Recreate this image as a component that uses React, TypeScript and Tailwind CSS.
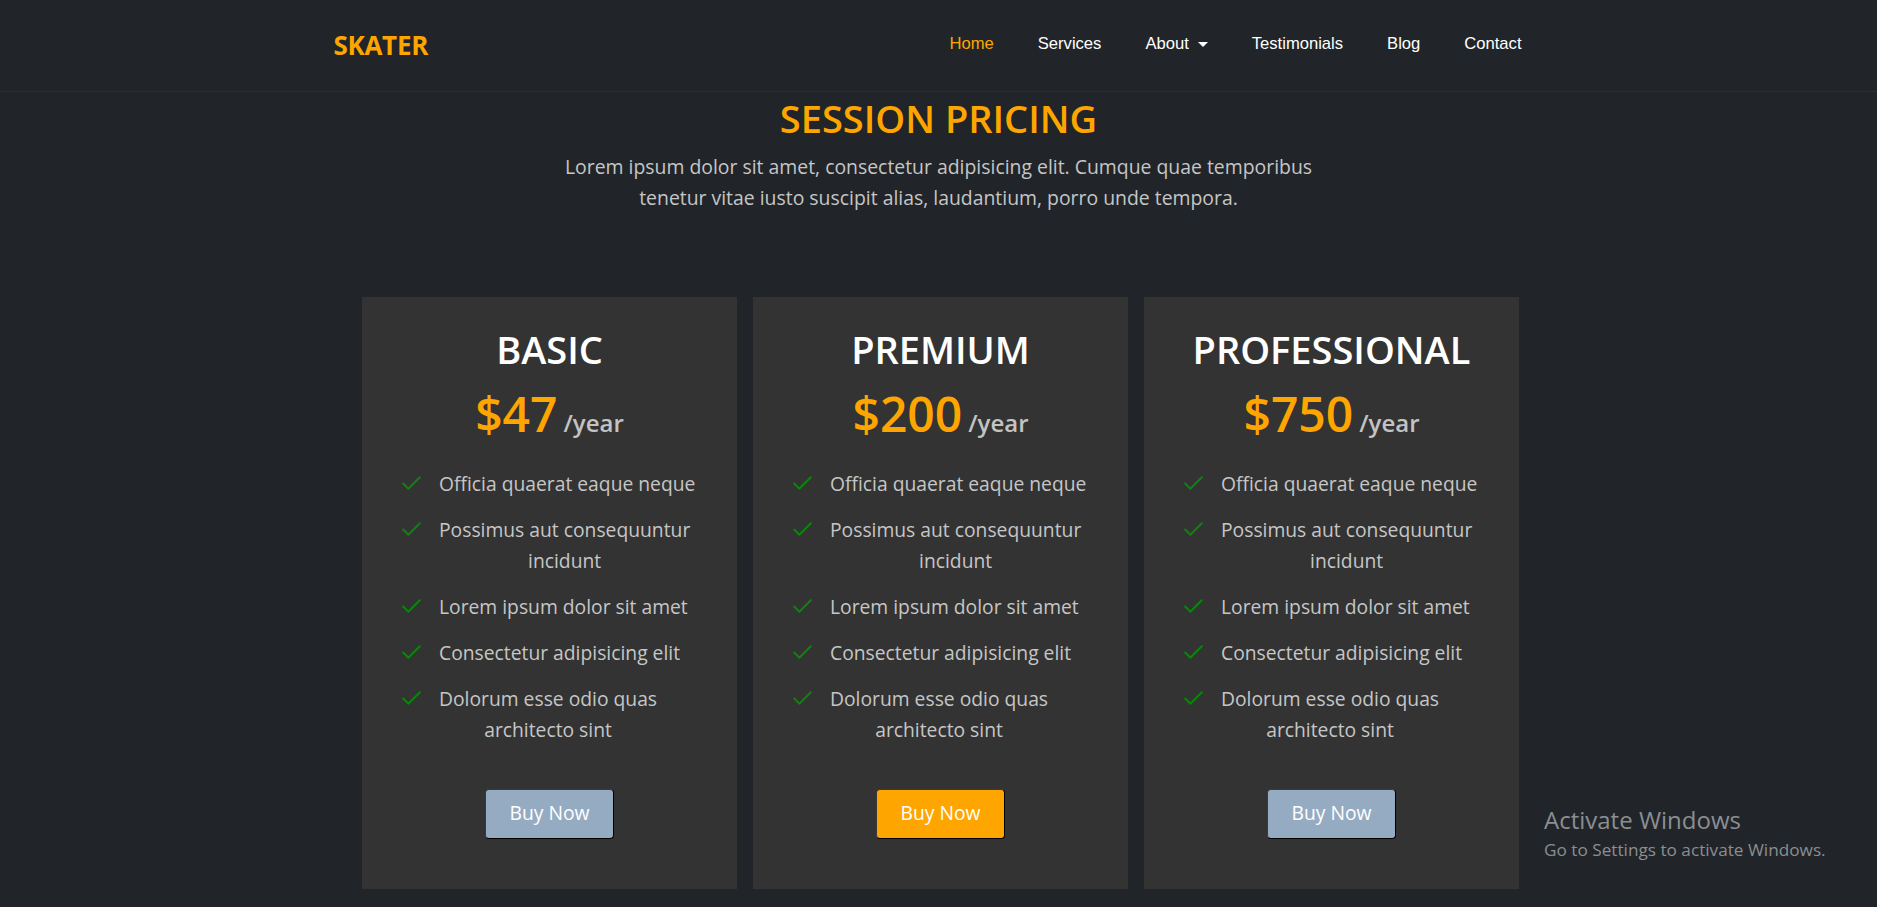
import React from "react";
import { Check } from "lucide-react";

const features: string[][] = [
  ["Officia quaerat eaque neque"],
  ["Possimus aut consequuntur", "incidunt"],
  ["Lorem ipsum dolor sit amet"],
  ["Consectetur adipisicing elit"],
  ["Dolorum esse odio quas", "architecto sint"],
];

const plans = [
  { name: "BASIC", price: "$47", featured: false },
  { name: "PREMIUM", price: "$200", featured: true },
  { name: "PROFESSIONAL", price: "$750", featured: false },
];

function Card({ name, price, featured }: { name: string; price: string; featured: boolean }) {
  return (
    <div className="w-[375px] bg-[#333333] flex flex-col items-center pt-[30px] pb-[50px]">
      <h3 className="text-[38px] leading-[1.2] font-semibold text-white">{name}</h3>
      <div className="mt-[13px] flex items-baseline leading-[1.2]">
        <span className="text-[48px] font-semibold text-[#ffa500]">{price}</span>
        <span className="ml-[6px] text-[24px] font-semibold text-[#c3c3c3]">/year</span>
      </div>
      <ul className="self-stretch pl-[41px] mt-[25px] flex flex-col gap-[15px]">
        {features.map((f, i) => (
          <li key={i} className="flex items-start">
            <span className="w-[36px] h-[31px] flex items-center shrink-0">
              <Check size={25} strokeWidth={1.9} className="-ml-[4px] text-[#0b850b]" />
            </span>
            <span className="text-center text-[19.3px] leading-[31px] text-[#c6c6c6]">
              {f.map((line, j) => (
                <React.Fragment key={j}>
                  {j > 0 && <br />}
                  {line}
                </React.Fragment>
              ))}
            </span>
          </li>
        ))}
      </ul>
      <button
        className={`mt-[44px] w-[129px] h-[50px] rounded-[4px] border border-[#3a3a3a] border-b-black border-r-black text-white text-[19.3px] ${
          featured ? "bg-[#ffa500]" : "bg-[#94abc2]"
        }`}
      >
        Buy Now
      </button>
    </div>
  );
}

export default function App() {
  const links = ["Home", "Services", "About", "Testimonials", "Blog", "Contact"];
  return (
    <div
      className="min-h-[907px] bg-[#212529] relative"
      style={{ fontFamily: '"Open Sans", "Noto Sans", sans-serif' }}
    >
      <header className="border-b border-[#2c3035]">
        <div className="w-[1210px] mx-auto h-[91px] flex items-center justify-between">
          <span className="text-[26px] font-bold text-[#ffa500] tracking-[-0.3px]">SKATER</span>
          <nav
            className="flex items-center text-[16.6px] -mt-[2px]"
            style={{ fontFamily: '"Liberation Sans", Arial, sans-serif' }}
          >
            {links.map((l, i) => (
              <a
                key={l}
                className={`px-[22px] flex items-center ${i === 0 ? "text-[#ffa500]" : "text-white"}`}
              >
                {l}
                {l === "About" && (
                  <span className="ml-[9px] inline-block w-0 h-0 border-x-[5px] border-x-transparent border-t-[5px] border-t-white" />
                )}
              </a>
            ))}
          </nav>
        </div>
      </header>

      <section className="flex flex-col items-center">
        <h2 className="mt-[4px] text-[38px] leading-[1.2] font-semibold text-[#ffa500]">SESSION PRICING</h2>
        <p className="mt-[9px] text-center text-[19.4px] leading-[31px] text-[#c6c6c6]">
          Lorem ipsum dolor sit amet, consectetur adipisicing elit. Cumque quae temporibus
          <br />
          tenetur vitae iusto suscipit alias, laudantium, porro unde tempora.
        </p>
        <div className="mt-[84px] flex gap-[16px] pl-[4px]">
          {plans.map((p) => (
            <Card key={p.name} {...p} />
          ))}
        </div>
      </section>

      <div className="absolute left-[1544px] top-[805px] text-[#8b8e92]">
        <div className="text-[24px] leading-[30px]">Activate Windows</div>
        <div className="text-[17.2px] leading-[24px] mt-[3px]">Go to Settings to activate Windows.</div>
      </div>
    </div>
  );
}
